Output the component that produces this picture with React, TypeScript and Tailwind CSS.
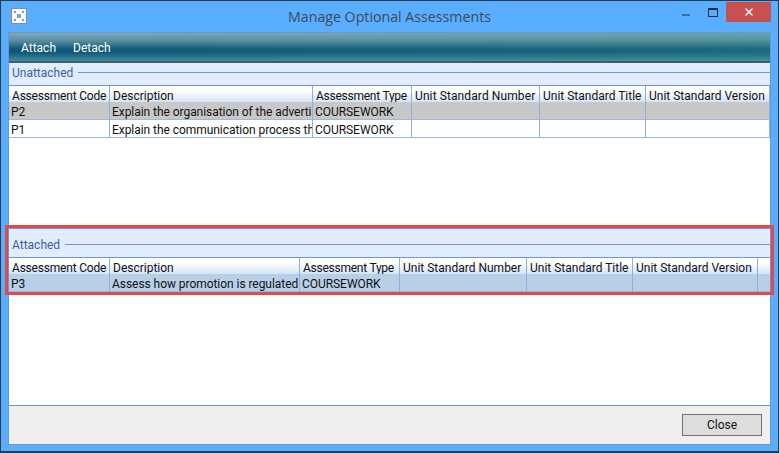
import React from 'react';
import { X } from 'lucide-react';

type Col = { label: string; w: string; fit?: string };

const topCols: Col[] = [
  { label: 'Assessment Code', w: 'w-[101px]', fit: 'tracking-[-0.2px]' },
  { label: 'Description', w: 'w-[203px]' },
  { label: 'Assessment Type', w: 'w-[99px]', fit: 'tracking-[-0.25px]' },
  { label: 'Unit Standard Number', w: 'w-[128px]', fit: 'tracking-[0.1px]' },
  { label: 'Unit Standard Title', w: 'w-[106px]' },
  { label: 'Unit Standard Version', w: 'w-[124px]' },
];

const bottomCols: Col[] = [
  { label: 'Assessment Code', w: 'w-[101px]', fit: 'tracking-[-0.2px]' },
  { label: 'Description', w: 'w-[190px]' },
  { label: 'Assessment Type', w: 'w-[100px]', fit: 'tracking-[-0.25px]' },
  { label: 'Unit Standard Number', w: 'w-[127px]' },
  { label: 'Unit Standard Title', w: 'w-[106px]' },
  { label: 'Unit Standard Version', w: 'w-[125px]' },
];

const HeaderRow = ({ cols, filler }: { cols: Col[]; filler?: boolean }) => (
  <div className="flex h-[16px] shrink-0 bg-[linear-gradient(to_bottom,#ffffff_0%,#ffffff_30%,#d3e4f6_100%)] text-[12px] leading-[20px] text-[#111]">
    {cols.map((c) => (
      <div key={c.label} className={`${c.w} ${c.fit ?? ''} shrink-0 overflow-hidden whitespace-nowrap border-r border-[#8fb0de] pl-[3px]`}>
        {c.label}
      </div>
    ))}
    {filler && <div className="flex-1" />}
  </div>
);

const DataRow = ({ cols, values, className, filler }: { cols: Col[]; values: string[]; className: string; filler?: boolean }) => (
  <div className={`flex h-[18px] shrink-0 border-b border-[#9db8e0] text-[12px] leading-[20px] tracking-[-0.05px] text-[#111] ${className}`}>
    {cols.map((c, i) => (
      <div key={c.label} className={`${c.w} shrink-0 overflow-hidden whitespace-nowrap border-r border-[#8fb0de] pl-[2px]`}>
        {values[i]}
      </div>
    ))}
    {filler && <div className="flex-1" />}
  </div>
);

const Legend = ({ text }: { text: string }) => (
  <div className="flex items-start gap-[5px] pl-[3px] text-[12px] leading-[16px] text-[#3a5fa8]">
    <span>{text}</span>
    <div className="mt-[7px] h-px flex-1 bg-[#6d97d6]" />
  </div>
);

const App = () => {
  return (
    <div className="flex h-[453px] w-[779px] flex-col overflow-hidden border-b-2 border-l border-r border-t border-[#2b3a48] bg-[#59aeff] font-['Roboto',sans-serif]">
      {/* title bar */}
      <div className="grid h-[31px] shrink-0 grid-cols-[1fr_auto_1fr] items-start">
        <div className="ml-[10px] mt-[7px] flex h-[16px] w-[16px] items-center justify-center border border-[#8f7fc4] bg-white">
          <svg width="12" height="12" viewBox="0 0 12 12">
            <rect x="4" y="4" width="4" height="4" fill="#6fa6dc" />
            <rect x="1" y="1" width="2" height="2" fill="#8f86c9" />
            <rect x="9" y="1" width="2" height="2" fill="#22b8e6" />
            <rect x="1" y="9" width="2" height="2" fill="#8f86c9" />
            <rect x="9" y="9" width="2" height="2" fill="#22b8e6" />
          </svg>
        </div>
        <div className="pt-[6px] text-center font-['Open_Sans',sans-serif] text-[14.2px] leading-[20px] text-[#3d4a58]">
          Manage Optional Assessments
        </div>
        <div className="mr-[7px] flex items-start justify-end">
          <div className="mr-[18px] mt-[13px] h-[2px] w-[8px] bg-[#3d6f9e]" />
          <div className="mr-[8px] mt-[7px] h-[9px] w-[10px] border border-t-2 border-[#1e2b3a]" />
          <div className="mt-[1px] flex h-[20px] w-[45px] items-center justify-center bg-[#c75050]">
            <X size={12} strokeWidth={3} className="text-white" />
          </div>
        </div>
      </div>

      {/* content */}
      <div className="mx-[7px] flex min-h-0 flex-1 flex-col border border-[#6a96d6] bg-white">
        <div className="flex h-[30px] shrink-0 items-center gap-[17px] border-b-2 border-[#3f5f70] bg-[linear-gradient(to_right,transparent,rgba(60,150,140,0.3)),linear-gradient(to_bottom,#7ea9b6_0%,#5d93a6_25%,#0f5578_58%,#12587a_70%,#3f8c9c_100%)] pl-[12px] pt-[1px] text-[12px] text-white">
          <span>Attach</span>
          <span>Detach</span>
        </div>

        <div className="h-[23px] shrink-0 border-b border-[#6d97d6] bg-[#e1edff] pt-[2px]">
          <Legend text="Unattached" />
        </div>
        <HeaderRow cols={topCols} />
        <DataRow cols={topCols} values={['P2', 'Explain the organisation of the advertising industry', 'COURSEWORK', '', '', '']} className="bg-[#c8c8c8]" />
        <DataRow cols={topCols} values={['P1', 'Explain the communication process that is used', 'COURSEWORK', '', '', '']} className="bg-white" />

        <div className="h-[90px] shrink-0" />

        <div className="relative shrink-0">
          <div className="h-[30px] border-b border-t border-[#6d97d6] bg-[#e1edff] pt-[8px]">
            <Legend text="Attached" />
          </div>
          <HeaderRow cols={bottomCols} filler />
          <DataRow cols={bottomCols} values={['P3', 'Assess how promotion is regulated in the UK', 'COURSEWORK', '', '', '']} className="bg-[#b8cfe8]" filler />
          <div className="absolute -bottom-[3px] -left-[4px] -right-[4px] -top-[3px] border-[3px] border-[#e04a4a]" />
        </div>

        <div className="flex-1" />

        <div className="flex h-[39px] shrink-0 items-start justify-end border-t border-[#6a96d6] bg-[#efefef] pr-[8px] pt-[8px]">
          <button className="h-[22px] w-[80px] border border-[#707070] bg-[#dddddd] pt-[1px] text-[12px] leading-[17px] text-[#111]">
            Close
          </button>
        </div>
      </div>
      <div className="h-[6px] shrink-0" />
    </div>
  );
};

export default App;
